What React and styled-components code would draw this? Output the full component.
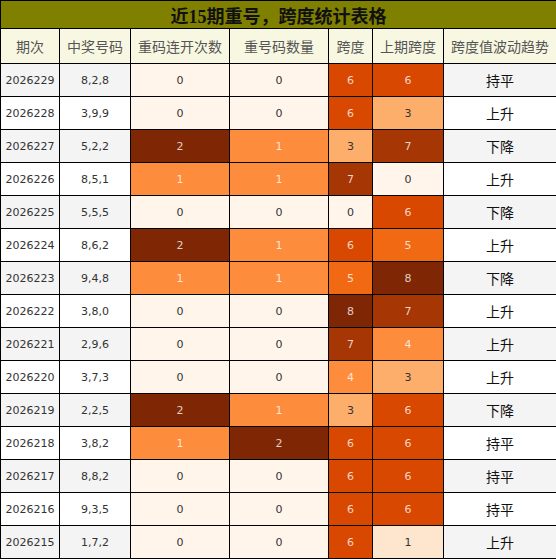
import React from 'react';
import styled, { createGlobalStyle } from 'styled-components';

const GlobalStyle = createGlobalStyle`
    body {
        margin: 0;
        background: #fff;
    }
`

const Table = styled.table`
    width: 556px;
    border-collapse: collapse;
    table-layout: fixed;
    font-family: "DejaVu Sans", sans-serif;
`

const TitleCell = styled.th`
    height: 27px;
    padding: 0;
    background: #808000;
    border: 1px solid #000;
    color: #111;
    font-family: "Liberation Serif", "Noto Sans CJK SC", serif;
    font-size: 18px;
    font-weight: bold;
    text-align: center;
`

const HeadCell = styled.th`
    height: 34px;
    padding: 0;
    background: #f8f8e2;
    border: 1px solid #000;
    color: #555;
    font-family: "Noto Sans CJK SC", sans-serif;
    font-size: 14px;
    font-weight: normal;
    text-align: center;
    white-space: nowrap;
`

const Cell = styled.td`
    height: 32px;
    padding: 0;
    border: 1px solid #000;
    background: ${p => p.$bg};
    color: ${p => p.$fg || '#333'};
    font-size: 11px;
    text-align: center;
`

const TrendCell = styled(Cell)`
    font-family: "Noto Sans CJK SC", sans-serif;
    font-size: 14px;
    color: #111;
`

const repeatColors = { 0: '#fff5eb', 1: '#fd8d3c', 2: '#7f2704' }
const spanColors = {
    0: '#fff5eb', 1: '#fee6ce', 2: '#fdd0a2', 3: '#fdae6b', 4: '#fd8d3c',
    5: '#f16913', 6: '#d94801', 7: '#a63603', 8: '#7f2704',
}
const light = 'rgba(255,255,255,0.78)'

const rows = [
    ['2026229', '8,2,8', 0, 0, 6, 6, '持平'],
    ['2026228', '3,9,9', 0, 0, 6, 3, '上升'],
    ['2026227', '5,2,2', 2, 1, 3, 7, '下降'],
    ['2026226', '8,5,1', 1, 1, 7, 0, '上升'],
    ['2026225', '5,5,5', 0, 0, 0, 6, '下降'],
    ['2026224', '8,6,2', 2, 1, 6, 5, '上升'],
    ['2026223', '9,4,8', 1, 1, 5, 8, '下降'],
    ['2026222', '3,8,0', 0, 0, 8, 7, '上升'],
    ['2026221', '2,9,6', 0, 0, 7, 4, '上升'],
    ['2026220', '3,7,3', 0, 0, 4, 3, '上升'],
    ['2026219', '2,2,5', 2, 1, 3, 6, '下降'],
    ['2026218', '3,8,2', 1, 2, 6, 6, '持平'],
    ['2026217', '8,8,2', 0, 0, 6, 6, '持平'],
    ['2026216', '9,3,5', 0, 0, 6, 6, '持平'],
    ['2026215', '1,7,2', 0, 0, 6, 1, '上升'],
]

const widths = [59, 71, 99, 99, 44, 71, 113]
const heads = ['期次', '中奖号码', '重码连开次数', '重号码数量', '跨度', '上期跨度', '跨度值波动趋势']

function RepeatCell({ v }) {
    return <Cell $bg={repeatColors[v]} $fg={v > 0 ? light : '#333'}>{v}</Cell>
}

function SpanCell({ v }) {
    return <Cell $bg={spanColors[v]} $fg={v >= 4 ? light : '#333'}>{v}</Cell>
}

export default function App() {
    return (
        <>
            <GlobalStyle />
            <Table>
                <colgroup>
                    {widths.map((w, i) => <col key={i} style={{ width: w }} />)}
                </colgroup>
                <thead>
                    <tr><TitleCell colSpan={7}>近15期重号，跨度统计表格</TitleCell></tr>
                    <tr>{heads.map(h => <HeadCell key={h}>{h}</HeadCell>)}</tr>
                </thead>
                <tbody>
                    {rows.map((r, i) => {
                        const base = i % 2 === 0 ? '#f4f4f4' : '#fff'
                        return (
                            <tr key={r[0]}>
                                <Cell $bg={base}>{r[0]}</Cell>
                                <Cell $bg={base}>{r[1]}</Cell>
                                <RepeatCell v={r[2]} />
                                <RepeatCell v={r[3]} />
                                <SpanCell v={r[4]} />
                                <SpanCell v={r[5]} />
                                <TrendCell $bg={base}>{r[6]}</TrendCell>
                            </tr>
                        )
                    })}
                </tbody>
            </Table>
        </>
    );
}
